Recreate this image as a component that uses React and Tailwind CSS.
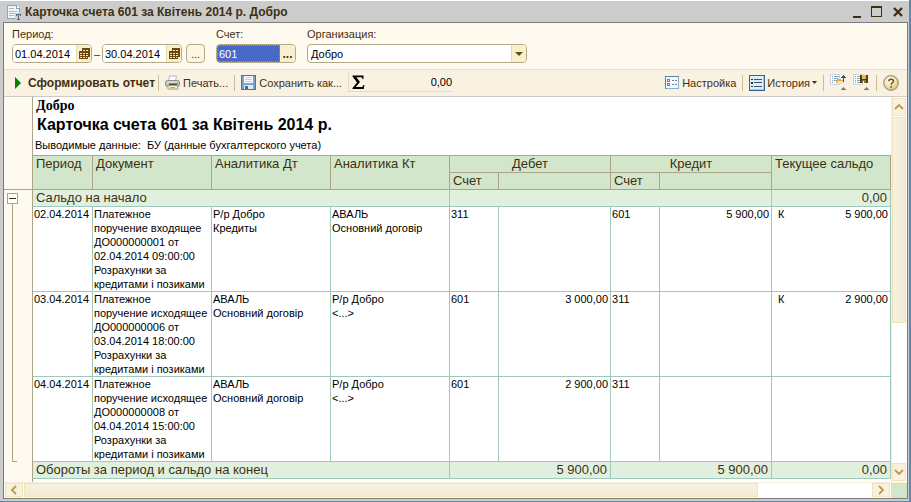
import React from "react";

const BORDER = "border border-[#b3a985] rounded-[4px]";
const GREEN_LINE = "border-[#a0c8bc]";
const TAN_LINE = "border-[#ada387]";

function ReportIcon() {
  return (
    <svg width="16" height="16" viewBox="0 0 16 16" shapeRendering="crispEdges" aria-hidden="true">
      <path d="M1 1h9l3 3v10H1z" fill="#eef4f8" stroke="#8fa5b3" />
      <path d="M10 1v3h3" fill="#fff" stroke="#8fa5b3" />
      <path d="M3 4.5h5M3 7.5h8M3 9.5h7M3 11.5h5" stroke="#a9bac5" />
      <path d="M9 9h7v7H9z" fill="#cccccc" />
      <path d="M10 10.5h5M12.5 10v6M11 15.5h3M10.5 10v2M14.5 10v2" stroke="#4c6f87" fill="none" />
    </svg>
  );
}

function CalendarIcon() {
  return (
    <svg width="11" height="12" viewBox="0 0 11 12" shapeRendering="crispEdges" aria-hidden="true">
      <path d="M3 0h8v9h-2v2H0V3h3z" fill="#6b4a0c" />
      <path d="M4 2h2v1H4zM7 2h2v1H7zM1 5h2v1H1zM4 5h2v1H4zM7 5h2v1H7zM1 7h2v1H1zM4 7h2v1H4zM7 7h2v1H7zM1 9h2v1H1zM4 9h2v1H4zM7 9h1v1H7z" fill="#f4e7b8" />
    </svg>
  );
}

function PrintIcon() {
  return (
    <svg width="15" height="15" viewBox="0 0 15 15" aria-hidden="true">
      <path d="M4.500 1h7l-1 5H3.500z" fill="#fff" stroke="#a9bccb" />
      <rect x="0.5" y="5.5" width="14" height="6" rx="2" fill="#c2c2bc" stroke="#8c8c85" />
      <path d="M2 7h11" stroke="#efefea" />
      <path d="M4 8.500h8v1.500H4z" fill="#4c4c48" />
      <path d="M3 10.500h9l1 3.500H3z" fill="#fbf3c8" stroke="#a39a78" />
      <path d="M5 12.500h5" stroke="#d9ac4a" />
      <path d="M12 8h1.500" stroke="#5fa64a" />
    </svg>
  );
}

function SaveIcon() {
  return (
    <svg width="15" height="15" viewBox="0 0 15 15" shapeRendering="crispEdges" aria-hidden="true">
      <rect x="0.5" y="0.5" width="14" height="14" fill="#7aa5c8" stroke="#4a7699" />
      <rect x="3" y="1" width="9" height="7" fill="#fff" />
      <path d="M4 2.5h7M4 4.5h7M4 6.5h7" stroke="#b9cfdf" />
      <rect x="3" y="10" width="9" height="4" fill="#e3ebf1" />
      <rect x="4" y="11" width="3" height="3" fill="#3f6f96" />
    </svg>
  );
}

function SigmaIcon() {
  return (
    <svg width="13" height="15" viewBox="0 0 13 15" aria-hidden="true">
      <path d="M0.5 0.5H11.5V4H10.5C10.3 2.6 9.8 2.2 8.4 2.2H4.4L8 7L3.8 12H9C10.4 12 11 11.4 11.3 10H12.4L11.8 14H0.5V13L5 7.6L0.5 1.6Z" fill="#000" />
    </svg>
  );
}

function SettingsIcon() {
  return (
    <svg width="14" height="13" viewBox="0 0 14 13" shapeRendering="crispEdges" aria-hidden="true">
      <rect x="0.5" y="0.5" width="13" height="12" fill="#f2f8fc" stroke="#8ab0d0" />
      <path d="M0 0.5h14M0.5 0v13" stroke="#5a84a8" />
      <rect x="2.5" y="3.5" width="2" height="2" fill="#fff" stroke="#6f7f8c" />
      <rect x="2.5" y="7.5" width="2" height="2" fill="#fff" stroke="#6f7f8c" />
      <path d="M7 4.5h2M10 4.5h2M7 8.5h2M10 8.5h2" stroke="#6f7f8c" />
    </svg>
  );
}

function HistoryIcon() {
  return (
    <svg width="16" height="16" viewBox="0 0 16 16" shapeRendering="crispEdges" aria-hidden="true">
      <rect x="0.5" y="0.5" width="15" height="15" fill="#e2effb" stroke="#2f6590" />
      <path d="M1 14.5h14M14.5 1v14" stroke="#a9cbe8" />
      <path d="M2 4h2v1H2zM2 7h2v2H2zM2 11h2v1H2z" fill="#1d3c55" />
      <path d="M5 4.5h8M5 7.5h8M5 11.5h8" stroke="#36566f" />
    </svg>
  );
}

function LoadIcon() {
  return (
    <svg width="17" height="17" viewBox="0 0 17 17" shapeRendering="crispEdges" aria-hidden="true">
      <rect x="0.5" y="0.5" width="9" height="10" fill="#fff" stroke="#c6d6e2" />
      <path d="M2 2.5h1M4 2.5h5M2 4.5h1M4 4.5h4M2 6.5h1M4 6.5h2M2 8.5h1" stroke="#7fa3bf" />
      <path d="M7 5h3l1 1h3v4H6V6z" fill="#d9ac58" />
      <path d="M8 7h7l-1 3H6z" fill="#f9e4ae" />
      <path d="M13 1h1v1h1v1h1v1h-2v4h-1V4h-2V3h1V2h1z" fill="#2d5a78" />
      <path d="M13 13h1v1h1v1h1v1h-5v-1h1v-1h1z" fill="#8b8364" />
    </svg>
  );
}

function StoreIcon() {
  return (
    <svg width="17" height="17" viewBox="0 0 17 17" shapeRendering="crispEdges" aria-hidden="true">
      <rect x="0.5" y="0.5" width="9" height="10" fill="#fff" stroke="#c6d6e2" />
      <path d="M2 2.5h1M4 2.5h3M2 4.5h1M4 4.5h3M2 6.5h1M4 6.5h3M2 8.5h1M4 8.5h3" stroke="#7fa3bf" />
      <rect x="7" y="1" width="8" height="8" fill="#5b3d0c" />
      <rect x="9" y="1" width="4" height="4" fill="#e4ba52" />
      <rect x="9" y="6" width="4" height="3" fill="#8e7440" />
      <rect x="10" y="7" width="1" height="2" fill="#fff" />
      <path d="M13 13h1v1h1v1h1v1h-5v-1h1v-1h1z" fill="#8b8364" />
    </svg>
  );
}

function HelpIcon() {
  return (
    <svg width="16" height="16" viewBox="0 0 16 16" aria-hidden="true">
      <defs>
        <radialGradient id="help" cx="0.4" cy="0.3" r="0.8">
          <stop offset="0" stopColor="#fffdf0" />
          <stop offset="0.6" stopColor="#ecdca8" />
          <stop offset="1" stopColor="#cdb878" />
        </radialGradient>
      </defs>
      <circle cx="8" cy="8" r="7.3" fill="url(#help)" stroke="#a3977a" strokeWidth="1.2" />
      <path d="M5.8 6.2C5.8 3.6 10.4 3.6 10.4 6.2C10.4 7.8 8.2 7.8 8.2 9.8" fill="none" stroke="#6b511c" strokeWidth="1.5" />
      <rect x="7.4" y="11" width="1.6" height="1.6" fill="#6b511c" />
    </svg>
  );
}

function Chevron({ d }) {
  return (
    <svg width="10" height="10" viewBox="0 0 10 10" aria-hidden="true">
      <path d={d} fill="none" stroke="#b89a50" strokeWidth="1.8" />
    </svg>
  );
}

function Separator() {
  return <span className="h-4 w-px shrink-0 bg-[#c9bd98]" />;
}

function DateField({ id, value, label }) {
  return (
    <div className={`flex h-[19px] w-20 overflow-hidden bg-white ${BORDER}`}>
      <input id={id} aria-label={label} defaultValue={value} className="w-[63px] min-w-0 bg-white pl-[2px] leading-4 text-black outline-none" />
      <button type="button" aria-label="Календарь" className="flex flex-1 items-center justify-center border-l border-[#e6d9a8] bg-[#f8efcf]">
        <CalendarIcon />
      </button>
    </div>
  );
}

const rows = [
  {
    date: "02.04.2014",
    doc: ["Платежное", "поручение входящее", "ДО000000001 от", "02.04.2014 09:00:00", "Розрахунки за", "кредитами і позиками"],
    dt: ["Р/р Добро", "Кредиты"],
    kt: ["АВАЛЬ", "Основний договір"],
    da: "311", ds: "", ka: "601", ks: "5 900,00", sign: "К", bal: "5 900,00",
  },
  {
    date: "03.04.2014",
    doc: ["Платежное", "поручение исходящее", "ДО000000006 от", "03.04.2014 18:00:00", "Розрахунки за", "кредитами і позиками"],
    dt: ["АВАЛЬ", "Основний договір"],
    kt: ["Р/р Добро", "<...>"],
    da: "601", ds: "3 000,00", ka: "311", ks: "", sign: "К", bal: "2 900,00",
  },
  {
    date: "04.04.2014",
    doc: ["Платежное", "поручение исходящее", "ДО000000008 от", "04.04.2014 15:00:00", "Розрахунки за", "кредитами і позиками"],
    dt: ["АВАЛЬ", "Основний договір"],
    kt: ["Р/р Добро", "<...>"],
    da: "601", ds: "2 900,00", ka: "311", ks: "", sign: "", bal: "",
  },
];

function Lines({ items }) {
  return items.map((t) => <div key={t}>{t}</div>);
}

function ReportTable() {
  const head = `border-r border-b ${TAN_LINE} bg-[#d2e6cb] pl-[3px] text-left align-top font-normal`;
  const group = `border-t border-r border-b ${TAN_LINE} bg-[#d2e6cb] text-center font-normal`;
  const cell = `border-r border-b ${GREEN_LINE} pl-px pr-[2px] align-top`;
  const total = `border-r border-b ${GREEN_LINE} bg-[#e1f0de] px-[3px]`;
  return (
    <table className="w-full table-fixed border-separate border-spacing-0 whitespace-nowrap">
      <colgroup>
        <col className="w-[60px]" />
        <col className="w-[119px]" />
        <col className="w-[119px]" />
        <col className="w-[119px]" />
        <col className="w-[49px]" />
        <col className="w-[112px]" />
        <col className="w-[49px]" />
        <col className="w-[112px]" />
        <col />
      </colgroup>
      <thead className="text-[13px] leading-4 text-[#3f3010]">
        <tr className="h-[18px]">
          <th rowSpan={2} className={`border-t ${head}`}>Период</th>
          <th rowSpan={2} className={`border-t ${head}`}>Документ</th>
          <th rowSpan={2} className={`border-t ${head}`}>Аналитика Дт</th>
          <th rowSpan={2} className={`border-t ${head}`}>Аналитика Кт</th>
          <th colSpan={2} className={group}>Дебет</th>
          <th colSpan={2} className={group}>Кредит</th>
          <th rowSpan={2} className={`border-t ${head}`}>Текущее сальдо</th>
        </tr>
        <tr className="h-[17px]">
          <th className={head}>Счет</th>
          <th className={head} />
          <th className={head}>Счет</th>
          <th className={head} />
        </tr>
      </thead>
      <tbody className="text-[11px] leading-[14px] text-black">
        <tr className="h-[17px] text-[13px] leading-4 text-[#3f3010]">
          <td colSpan={4} className={total}>Сальдо на начало</td>
          <td colSpan={4} className={total} />
          <td className={`${total} text-right`}>0,00</td>
        </tr>
        {rows.map((r) => (
          <tr key={r.date}>
            <td className={cell}>{r.date}</td>
            <td className={cell}><Lines items={r.doc} /></td>
            <td className={cell}><Lines items={r.dt} /></td>
            <td className={cell}><Lines items={r.kt} /></td>
            <td className={cell}>{r.da}</td>
            <td className={`${cell} text-right`}>{r.ds}</td>
            <td className={cell}>{r.ka}</td>
            <td className={`${cell} text-right`}>{r.ks}</td>
            <td className={cell}>
              <div className="flex justify-between pl-[5px]">
                <span>{r.sign}</span>
                <span>{r.bal}</span>
              </div>
            </td>
          </tr>
        ))}
      </tbody>
      <tfoot className="text-[13px] leading-4 text-[#3f3010]">
        <tr className="h-[17px]">
          <td colSpan={4} className={total}>Обороты за период и сальдо на конец</td>
          <td colSpan={2} className={`${total} text-right`}>5 900,00</td>
          <td colSpan={2} className={`${total} text-right`}>5 900,00</td>
          <td className={`${total} text-right`}>0,00</td>
        </tr>
      </tfoot>
    </table>
  );
}

const scrollButton = "flex shrink-0 items-center justify-center border border-[#efe3b8] bg-[#f9f1dd]";

export default function App() {
  return (
    <div className="flex h-screen flex-col overflow-hidden border-r-2 border-b border-[#5f88ac] bg-[#cccccc] font-['Liberation_Sans',Arial,sans-serif] text-[#3f3010]">
      <header className="flex h-[22px] shrink-0 items-center border-t border-white px-[6px]">
        <ReportIcon />
        <h1 className="ml-[3px] flex-1 text-[12px] leading-4 font-bold whitespace-nowrap">Карточка счета 601 за Квітень 2014 р. Добро</h1>
        <div className="flex items-center gap-[9px]">
          <button aria-label="Свернуть" className="flex h-3 w-[10px] items-end px-px">
            <span className="h-[2px] w-2 bg-[#3f3010]" />
          </button>
          <button aria-label="Развернуть" className="h-[11px] w-[11px] border border-t-2 border-[#3f3010]" />
          <button aria-label="Закрыть" className="ml-[2px]">
            <svg width="10" height="10" viewBox="0 0 10 10" aria-hidden="true">
              <path d="M1 1l8 8M9 1l-8 8" stroke="#3f3010" strokeWidth="2.4" />
            </svg>
          </button>
        </div>
      </header>

      <main className="mr-px mb-[2px] ml-[3px] flex min-h-0 flex-1 flex-col border border-[#7b7b7b] bg-[#fffaf0]">
        <form className="flex h-[46px] shrink-0 gap-[11px] pt-1 pl-2 text-[11px] leading-[14px]" onSubmit={(e) => e.preventDefault()}>
          <div className="flex flex-col gap-[3px]">
            <label htmlFor="from">Период:</label>
            <div className="flex items-center">
              <DateField id="from" value="01.04.2014" label="Начало периода" />
              <span className="w-[10px] text-center">–</span>
              <DateField id="to" value="30.04.2014" label="Конец периода" />
              <button type="button" className={`ml-1 h-[19px] w-[19px] bg-[#fdf7e2] leading-3 ${BORDER}`}>...</button>
            </div>
          </div>
          <div className="flex flex-col gap-[3px]">
            <label htmlFor="account">Счет:</label>
            <div className={`flex h-[19px] w-20 overflow-hidden bg-white ${BORDER}`}>
              <input id="account" defaultValue="601" className="w-[63px] min-w-0 border border-dotted border-[#c9963c] bg-[#4a69c6] pl-px text-white outline-none" />
              <button type="button" aria-label="Выбрать счет" className="flex-1 bg-[#f8efcf] text-[12px] leading-3 font-bold">...</button>
            </div>
          </div>
          <div className="flex flex-col gap-[3px]">
            <label htmlFor="org">Организация:</label>
            <div className={`relative h-[19px] w-[220px] overflow-hidden bg-white ${BORDER}`}>
              <select id="org" className="h-full w-full appearance-none pl-[3px] text-black outline-none">
                <option>Добро</option>
              </select>
              <span className="pointer-events-none absolute inset-y-0 right-0 flex w-[15px] items-center justify-center border-l border-[#e6d9a8] bg-[#f8efcf]">
                <svg width="8" height="4" viewBox="0 0 8 4" aria-hidden="true">
                  <path d="M0 0h8L4 4z" fill="#6b4a0c" />
                </svg>
              </span>
            </div>
          </div>
        </form>

        <div className="flex h-7 shrink-0 items-center border-y border-t-[#e9e0d2] border-b-[#cccac4] bg-[#f9f1e2] pr-2 pb-px pl-[11px] text-[11px] leading-4 whitespace-nowrap">
          <button className="flex items-center gap-[7px] text-[12px] font-bold">
            <svg width="6" height="12" viewBox="0 0 6 12" aria-hidden="true">
              <path d="M0 0l6 6l-6 6z" fill="#008000" />
            </svg>
            Сформировать отчет
          </button>
          <span className="ml-[3px] flex"><Separator /></span>
          <button className="ml-[6px] flex items-center gap-[3px]"><PrintIcon />Печать...</button>
          <span className="ml-[6px] flex"><Separator /></span>
          <button className="ml-[6px] flex items-center gap-[3px]"><SaveIcon />Сохранить как...</button>
          <div className="ml-[6px] flex h-[19px] w-[104px] items-center justify-between border-b border-l border-[#e3dac8] pl-[3px] text-black">
            <SigmaIcon />
            <output>0,00</output>
          </div>
          <div className="ml-auto flex items-center gap-[6px]">
            <button className="flex items-center gap-[3px]"><SettingsIcon />Настройка</button>
            <Separator />
            <button className="flex items-center gap-[2px]">
              <HistoryIcon />История
              <svg width="5" height="3" viewBox="0 0 5 3" aria-hidden="true">
                <path d="M0 0h5L2.500 3z" fill="#3f3010" />
              </svg>
            </button>
            <Separator />
            <button aria-label="Восстановить настройки"><LoadIcon /></button>
            <button aria-label="Сохранить настройки"><StoreIcon /></button>
            <Separator />
            <button aria-label="Справка"><HelpIcon /></button>
          </div>
        </div>

        <div className="flex min-h-0 flex-1 bg-white">
          <aside className="flex w-[29px] shrink-0 flex-col border-r border-[#ada387] bg-[#fffaf0]">
            <div className="h-[93px] shrink-0 border-b border-[#ada387]" />
            <button aria-label="Свернуть группу" className="mt-[3px] ml-[3px] flex h-[11px] w-[11px] shrink-0 items-center justify-center border border-[#ada387] bg-white">
              <span className="h-px w-[7px] bg-[#3f3010]" />
            </button>
            <div className="mb-5 ml-2 w-[5px] flex-1 border-b border-l border-[#ada387]" />
          </aside>
          <section className="min-w-0 flex-1">
            <div className="h-[58px] pl-[2px] text-black">
              <div className="h-[17px] pl-px font-['Liberation_Serif',serif] text-[14px] leading-[17px] font-bold">Добро</div>
              <h2 className="h-[23px] pl-[2px] text-[16px] leading-[22px] font-bold">Карточка счета 601 за Квітень 2014 р.</h2>
              <p className="text-[11px] leading-[17px] whitespace-pre">Выводимые данные:  БУ (данные бухгалтерского учета)</p>
            </div>
            <ReportTable />
          </section>
          <div className="flex w-4 shrink-0 flex-col gap-px border-l border-[#f5eed8] pt-px pr-px pb-px">
            <button aria-label="Вверх" className={`h-[18px] ${scrollButton}`}><Chevron d="M1 7l4-4l4 4" /></button>
            <div className="h-[206px] border border-[#efe3b8] bg-gradient-to-r from-[#f9f1e0] to-[#f3ead2]" />
            <button aria-label="Вниз" className={`mt-auto h-[18px] ${scrollButton}`}><Chevron d="M1 3l4 4l4-4" /></button>
          </div>
        </div>

        <div className="flex h-4 shrink-0 border-t border-[#f5eed8] bg-white">
          <div className="flex min-w-0 flex-1 gap-px pr-px pb-px pl-px">
            <button aria-label="Влево" className={`w-[18px] ${scrollButton}`}><Chevron d="M7 1l-4 4l4 4" /></button>
            <div className="w-[734px] border border-[#efe3b8] bg-gradient-to-b from-[#f9f1e0] to-[#f3ead2]" />
            <button aria-label="Вправо" className={`ml-auto w-[18px] ${scrollButton}`}><Chevron d="M3 1l4 4l-4 4" /></button>
          </div>
          <div className="w-4 bg-[#d2e6cb]" />
        </div>
      </main>
    </div>
  );
}
